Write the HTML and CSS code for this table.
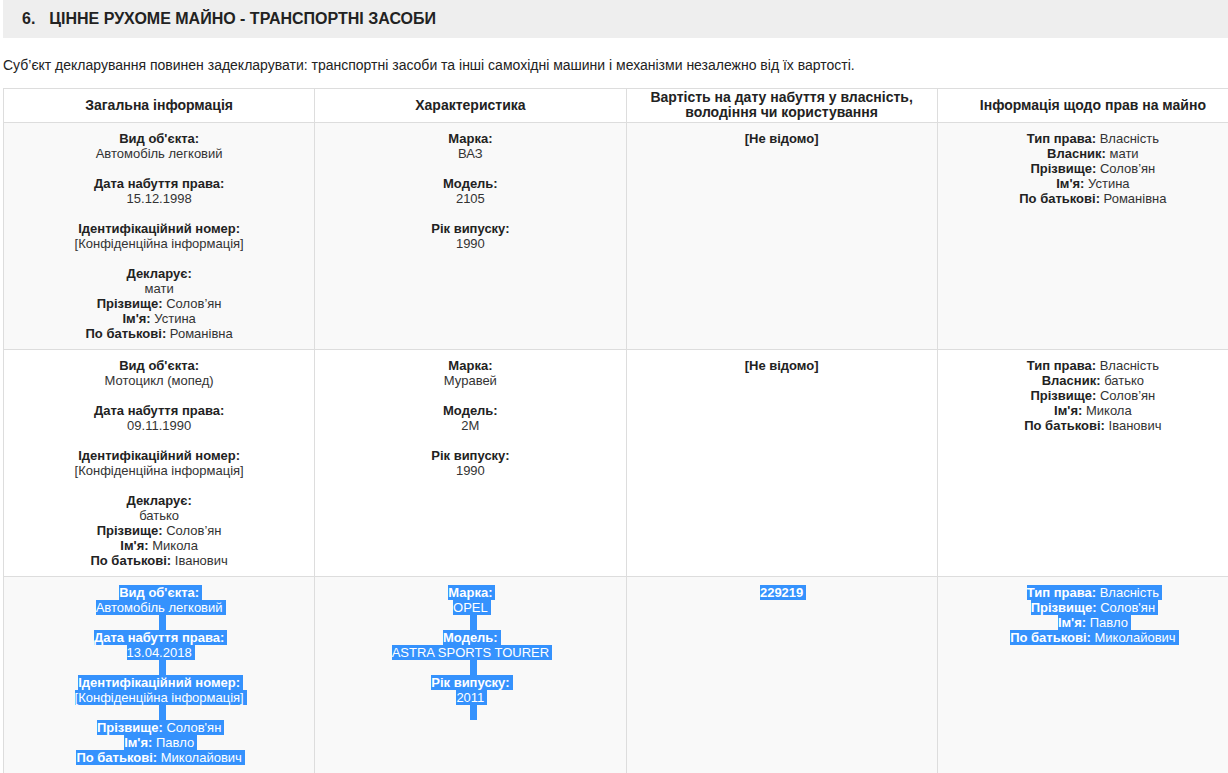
FILE: index.html
```html
<!DOCTYPE html>
<html lang="uk">
<head>
<meta charset="utf-8">
<title>Цінне рухоме майно - транспортні засоби</title>
<link rel="stylesheet" href="styles.css">
</head>
<body>
<div class="page">
  <div class="section-title"><span class="num">6.</span>ЦІННЕ РУХОМЕ МАЙНО - ТРАНСПОРТНІ ЗАСОБИ</div>
  <p class="intro">Суб’єкт декларування повинен задекларувати: транспортні засоби та інші самохідні машини і механізми незалежно від їх вартості.</p>
  <table class="assets">
    <thead>
      <tr>
        <th>Загальна інформація</th>
        <th>Характеристика</th>
        <th>Вартість на дату набуття у власність,<br>володіння чи користування</th>
        <th>Інформація щодо прав на майно</th>
      </tr>
    </thead>
    <tbody>
      <tr class="odd">
        <td>
          <div class="ln"><b>Вид об'єкта:</b></div>
          <div class="ln">Автомобіль легковий</div>
          <div class="blank"></div>
          <div class="ln"><b>Дата набуття права:</b></div>
          <div class="ln">15.12.1998</div>
          <div class="blank"></div>
          <div class="ln"><b>Ідентифікаційний номер:</b></div>
          <div class="ln">[Конфіденційна інформація]</div>
          <div class="blank"></div>
          <div class="ln"><b>Декларує:</b></div>
          <div class="ln">мати</div>
          <div class="ln"><b>Прізвище:</b> Солов’ян</div>
          <div class="ln"><b>Ім'я:</b> Устина</div>
          <div class="ln"><b>По батькові:</b> Романівна</div>
        </td>
        <td>
          <div class="ln"><b>Марка:</b></div>
          <div class="ln">ВАЗ</div>
          <div class="blank"></div>
          <div class="ln"><b>Модель:</b></div>
          <div class="ln">2105</div>
          <div class="blank"></div>
          <div class="ln"><b>Рік випуску:</b></div>
          <div class="ln">1990</div>
        </td>
        <td>
          <div class="ln"><b>[Не відомо]</b></div>
        </td>
        <td>
          <div class="ln"><b>Тип права:</b> Власність</div>
          <div class="ln"><b>Власник:</b> мати</div>
          <div class="ln"><b>Прізвище:</b> Солов’ян</div>
          <div class="ln"><b>Ім'я:</b> Устина</div>
          <div class="ln"><b>По батькові:</b> Романівна</div>
        </td>
      </tr>
      <tr>
        <td>
          <div class="ln"><b>Вид об'єкта:</b></div>
          <div class="ln">Мотоцикл (мопед)</div>
          <div class="blank"></div>
          <div class="ln"><b>Дата набуття права:</b></div>
          <div class="ln">09.11.1990</div>
          <div class="blank"></div>
          <div class="ln"><b>Ідентифікаційний номер:</b></div>
          <div class="ln">[Конфіденційна інформація]</div>
          <div class="blank"></div>
          <div class="ln"><b>Декларує:</b></div>
          <div class="ln">батько</div>
          <div class="ln"><b>Прізвище:</b> Солов’ян</div>
          <div class="ln"><b>Ім'я:</b> Микола</div>
          <div class="ln"><b>По батькові:</b> Іванович</div>
        </td>
        <td>
          <div class="ln"><b>Марка:</b></div>
          <div class="ln">Муравей</div>
          <div class="blank"></div>
          <div class="ln"><b>Модель:</b></div>
          <div class="ln">2М</div>
          <div class="blank"></div>
          <div class="ln"><b>Рік випуску:</b></div>
          <div class="ln">1990</div>
        </td>
        <td>
          <div class="ln"><b>[Не відомо]</b></div>
        </td>
        <td>
          <div class="ln"><b>Тип права:</b> Власність</div>
          <div class="ln"><b>Власник:</b> батько</div>
          <div class="ln"><b>Прізвище:</b> Солов’ян</div>
          <div class="ln"><b>Ім'я:</b> Микола</div>
          <div class="ln"><b>По батькові:</b> Іванович</div>
        </td>
      </tr>
      <tr class="odd selected">
        <td>
          <div class="ln"><span class="hl"><b>Вид об'єкта:</b></span></div>
          <div class="ln"><span class="hl">Автомобіль легковий</span></div>
          <div class="ln"><span class="hl gap"></span></div>
          <div class="ln"><span class="hl"><b>Дата набуття права:</b></span></div>
          <div class="ln"><span class="hl">13.04.2018</span></div>
          <div class="ln"><span class="hl gap"></span></div>
          <div class="ln"><span class="hl"><b>Ідентифікаційний номер:</b></span></div>
          <div class="ln"><span class="hl">[Конфіденційна інформація]</span></div>
          <div class="ln"><span class="hl gap"></span></div>
          <div class="ln"><span class="hl"><b>Прізвище:</b> Солов'ян</span></div>
          <div class="ln"><span class="hl"><b>Ім'я:</b> Павло</span></div>
          <div class="ln"><span class="hl"><b>По батькові:</b> Миколайович</span></div>
        </td>
        <td>
          <div class="ln"><span class="hl"><b>Марка:</b></span></div>
          <div class="ln"><span class="hl">OPEL</span></div>
          <div class="ln"><span class="hl gap"></span></div>
          <div class="ln"><span class="hl"><b>Модель:</b></span></div>
          <div class="ln"><span class="hl">ASTRA SPORTS TOURER</span></div>
          <div class="ln"><span class="hl gap"></span></div>
          <div class="ln"><span class="hl"><b>Рік випуску:</b></span></div>
          <div class="ln"><span class="hl">2011</span></div>
          <div class="ln"><span class="hl gap"></span></div>
        </td>
        <td>
          <div class="ln"><span class="hl"><b>229219</b></span></div>
        </td>
        <td>
          <div class="ln"><span class="hl"><b>Тип права:</b> Власність</span></div>
          <div class="ln"><span class="hl"><b>Прізвище:</b> Солов'ян</span></div>
          <div class="ln"><span class="hl"><b>Ім'я:</b> Павло</span></div>
          <div class="ln"><span class="hl"><b>По батькові:</b> Миколайович</span></div>
        </td>
      </tr>
    </tbody>
  </table>
</div>
</body>
</html>
```

FILE: styles.css
```css
html, body {
  margin: 0;
  padding: 0;
  background: #fff;
  overflow-x: hidden;
}

body {
  font-family: "Liberation Sans", Arial, sans-serif;
  color: #333;
}

.page {
  padding-left: 3px;
  width: 1246px;
}

.section-title {
  background: #eee;
  height: 38px;
  line-height: 38px;
  padding-left: 19px;
  font-size: 16px;
  font-weight: bold;
  color: #222;
}

.section-title .num {
  margin-right: 14px;
}

.intro {
  margin: 18px 0 14px;
  font-size: 14px;
  line-height: 18px;
  color: #222;
}

.assets {
  width: 1246px;
  table-layout: fixed;
  border-collapse: collapse;
  font-size: 13px;
  line-height: 15px;
}

.assets th {
  border: 1px solid #ddd;
  padding: 1px 8px 2px;
  height: 30px;
  font-size: 14px;
  line-height: 15px;
  font-weight: bold;
  text-align: center;
  vertical-align: middle;
  color: #222;
  background: #fff;
}

.assets td {
  border: 1px solid #ddd;
  padding: 8px;
  text-align: center;
  vertical-align: top;
}

.assets tr.odd td {
  background: #f9f9f9;
}

.assets b {
  color: #222;
}

.ln {
  min-height: 15px;
}

.blank {
  height: 15px;
}

.hl {
  display: inline-block;
  vertical-align: top;
  line-height: 15px;
  height: 15px;
  background: #3592fd;
  color: #fff;
  padding-right: 3px;
  margin-right: -3px;
}

.hl b {
  color: #fff;
}

.hl.gap {
  width: 4px;
  padding-right: 3px;
  margin-right: 0;
  margin-left: 6px;
}
```
